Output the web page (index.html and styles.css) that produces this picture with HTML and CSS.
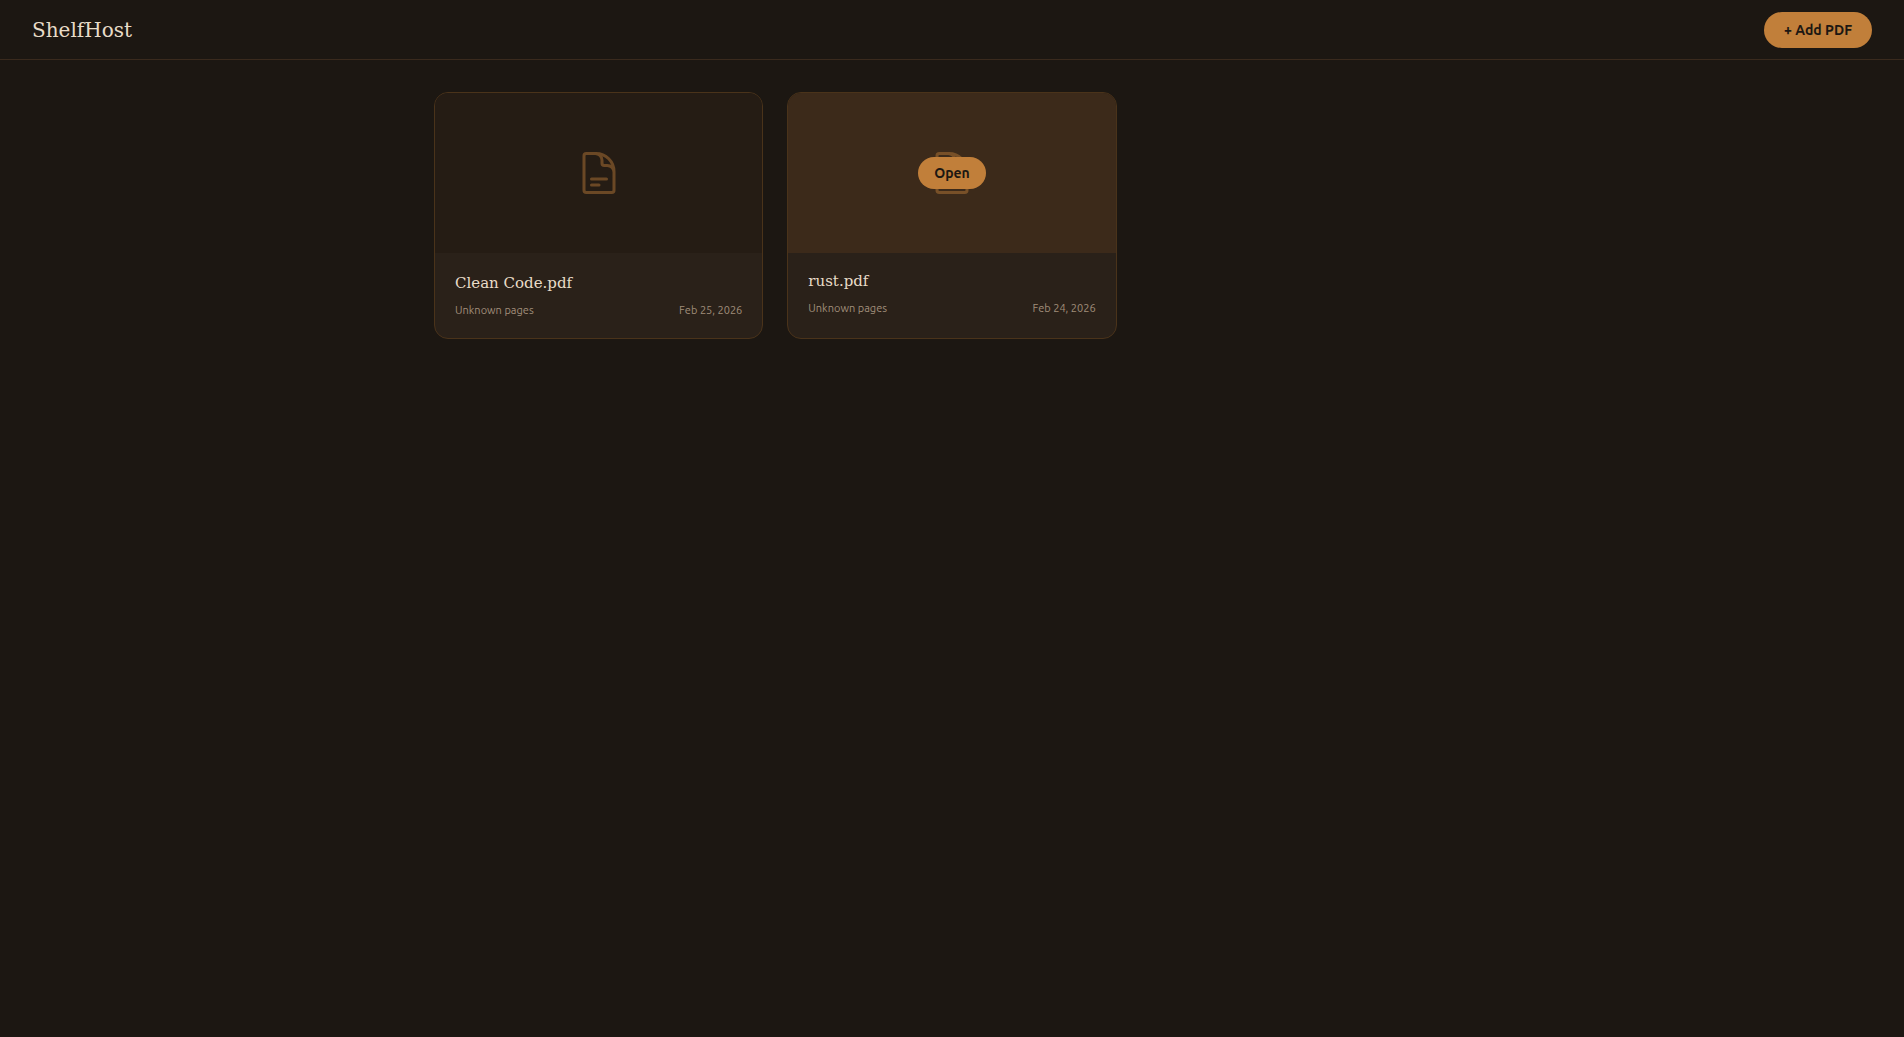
FILE: index.html
```
<!DOCTYPE html>
<html lang="en">

<head>
  <meta charset="UTF-8">
  <meta name="viewport" content="width=device-width, initial-scale=1.0">
  <title>ShelfHost</title>
  <link rel="stylesheet" href="styles.css">
</head>

<body>
  <header class="header">
    <h1 class="logo">ShelfHost</h1>
    <button type="button" class="btn btn-add">+ Add PDF</button>
  </header>

  <main class="shelf">
    <article class="card">
      <div class="card-cover">
        <svg class="card-icon" viewBox="0 0 24 24" aria-hidden="true">
          <path d="M19.5 14.25v-2.625a3.375 3.375 0 0 0-3.375-3.375h-1.5A1.125 1.125 0 0 1 13.5 7.125v-1.5a3.375 3.375 0 0 0-3.375-3.375H8.25m0 12.75h7.5m-7.5 3H12M10.5 2.25H5.625c-.621 0-1.125.504-1.125 1.125v17.25c0 .621.504 1.125 1.125 1.125h12.75c.621 0 1.125-.504 1.125-1.125V11.25a9 9 0 0 0-9-9Z" />
        </svg>
        <div class="card-overlay">
          <button type="button" class="btn btn-open">Open</button>
        </div>
      </div>
      <div class="card-body">
        <h2 class="card-title">Clean Code.pdf</h2>
        <div class="card-meta">
          <span>Unknown pages</span>
          <span>Feb 25, 2026</span>
        </div>
      </div>
    </article>

    <article class="card active">
      <div class="card-cover">
        <svg class="card-icon" viewBox="0 0 24 24" aria-hidden="true">
          <path d="M19.5 14.25v-2.625a3.375 3.375 0 0 0-3.375-3.375h-1.5A1.125 1.125 0 0 1 13.5 7.125v-1.5a3.375 3.375 0 0 0-3.375-3.375H8.25m0 12.75h7.5m-7.5 3H12M10.5 2.25H5.625c-.621 0-1.125.504-1.125 1.125v17.25c0 .621.504 1.125 1.125 1.125h12.75c.621 0 1.125-.504 1.125-1.125V11.25a9 9 0 0 0-9-9Z" />
        </svg>
        <div class="card-overlay">
          <button type="button" class="btn btn-open">Open</button>
        </div>
      </div>
      <div class="card-body">
        <h2 class="card-title">rust.pdf</h2>
        <div class="card-meta">
          <span>Unknown pages</span>
          <span>Feb 24, 2026</span>
        </div>
      </div>
    </article>
  </main>
</body>

</html>
```
FILE: styles.css
```
* {
  margin: 0;
  padding: 0;
  box-sizing: border-box;
}

body {
  font-family: Ubuntu, 'Noto Sans', sans-serif;
  background: #1c1712;
  color: #e8dcc8;
  min-height: 100vh;
}

.header {
  display: flex;
  align-items: center;
  justify-content: space-between;
  height: 60px;
  padding: 0 32px;
  border-bottom: 1px solid #3a2a1d;
}

.logo {
  font-family: 'DejaVu Serif', serif;
  font-size: 20px;
  font-weight: 400;
}

.btn {
  border: none;
  border-radius: 999px;
  background: #c17f3a;
  color: #1c1712;
  font-family: inherit;
  font-size: 14px;
  font-weight: 600;
  cursor: pointer;
}

.btn-add {
  height: 36px;
  padding: 0 20px;
}

.btn-open {
  height: 32px;
  padding: 0 16px;
}

.shelf {
  display: grid;
  grid-template-columns: repeat(auto-fill, minmax(280px, 1fr));
  gap: 24px;
  max-width: 1100px;
  margin: 0 auto;
  padding: 32px;
}

.card {
  background: #2a2119;
  border: 1px solid #4a331a;
  border-radius: 14px;
  overflow: hidden;
}

.card-cover {
  position: relative;
  display: flex;
  align-items: center;
  justify-content: center;
  height: 160px;
  background: #251c14;
}

.card-icon {
  width: 48px;
  height: 48px;
  fill: none;
  stroke: #c17f3a;
  stroke-width: 1.5;
  stroke-linecap: round;
  stroke-linejoin: round;
  opacity: 0.45;
}

.card-overlay {
  position: absolute;
  inset: 0;
  display: flex;
  align-items: center;
  justify-content: center;
  background: rgba(193, 127, 58, 0.15);
  opacity: 0;
  transition: opacity 0.2s ease;
}

.card:hover .card-overlay,
.card.active .card-overlay {
  opacity: 1;
}

.card-body {
  padding: 20px 20px 19px;
}

.card.active .card-body {
  padding-top: 18px;
}

.card-title {
  margin-bottom: 8px;
  font-family: 'DejaVu Serif', serif;
  font-size: 15px;
  font-weight: 400;
  line-height: 20px;
}

.card-meta {
  display: flex;
  justify-content: space-between;
  color: #a08e7a;
  font-size: 11px;
  line-height: 18px;
}
```
